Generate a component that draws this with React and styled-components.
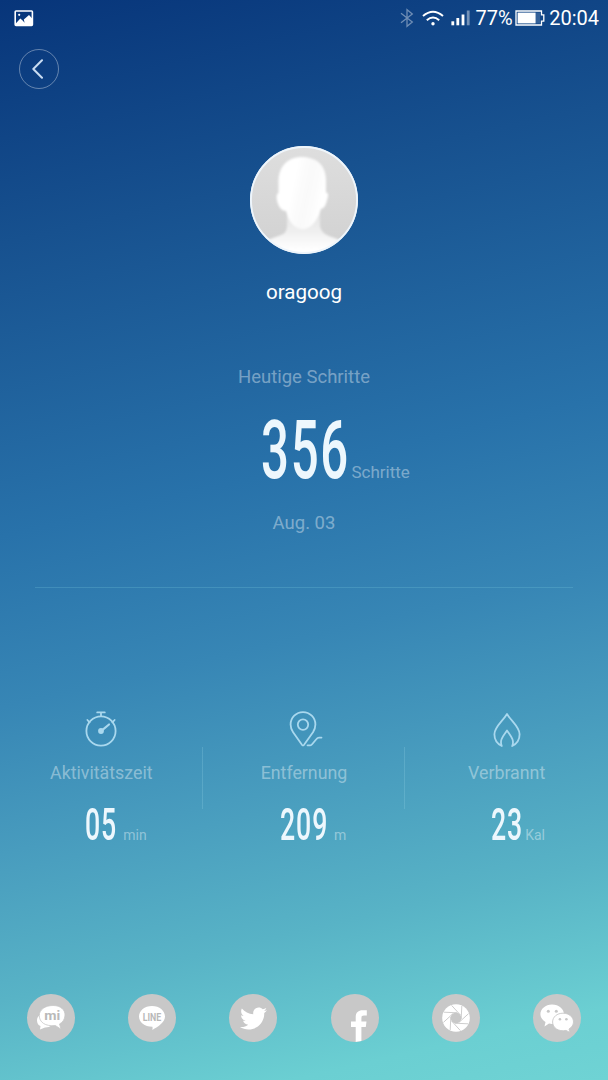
import React from 'react';
import styled, { createGlobalStyle } from 'styled-components';
import { FaTwitter } from 'react-icons/fa';

const PhotoIcon = () => (
  <svg width="20" height="17" viewBox="0 0 20 17">
    <rect x="1.2" y="1" width="17.2" height="14.4" rx="0.8" fill="none" stroke="#fff" strokeWidth="1.6" />
    <path d="M2 13.2 L6.3 8.4 L8.6 10.6 L10.6 12.8 L9.8 9.6 L15 5 L18 8.2 V15 H2 Z" fill="#fff" />
    <circle cx="5.2" cy="4.8" r="1.1" fill="#fff" />
  </svg>
);

const BluetoothIcon = () => (
  <svg width="14" height="20" viewBox="0 0 14 20">
    <path d="M1 5.3 L12.3 14 L7 18.3 V1.7 L12.3 6 L1 14.7" fill="none" stroke="#fff" strokeOpacity="0.4" strokeWidth="1.3" />
  </svg>
);

const WifiIcon = () => (
  <svg width="22" height="17" viewBox="0 0 22 17" fill="none" stroke="#fff" strokeWidth="2">
    <path d="M1 6 Q11 -2.6 21 6" />
    <path d="M4.8 10.2 Q11 4.8 17.2 10.2" />
    <circle cx="11" cy="13.8" r="1.7" fill="#fff" stroke="none" />
  </svg>
);

const SignalIcon = () => (
  <svg width="20" height="16" viewBox="0 0 20 16" fill="#fff">
    <rect x="0.4" y="11.3" width="2.8" height="4" />
    <rect x="5.4" y="8" width="2.8" height="7.3" />
    <rect x="10.6" y="4.5" width="2.8" height="10.8" />
    <rect x="15.8" y="0.5" width="2.8" height="14.8" opacity="0.42" />
  </svg>
);

const BatteryIcon = () => (
  <svg width="30" height="16" viewBox="0 0 30 16">
    <path d="M1 1 H26.5 V4.8 H28.8 V11.2 H26.5 V15 H1 Z" fill="none" stroke="#fff" strokeWidth="1.3" />
    <rect x="2.6" y="2.6" width="18" height="10.8" fill="#fff" />
    <rect x="20.6" y="2.6" width="4.5" height="10.8" fill="#fff" opacity="0.15" />
  </svg>
);

const ChevronIcon = () => (
  <svg width="12" height="20" viewBox="0 0 12 20">
    <path d="M10 1.3 L1.3 10 L10 18.7" fill="none" stroke="#c9dcf2" strokeWidth="2" strokeLinecap="round" strokeLinejoin="round" />
  </svg>
);

const Portrait = () => (
  <svg width="108" height="108" viewBox="0 0 108 108">
    <defs>
      <clipPath id="portraitClip"><circle cx="54" cy="54" r="53" /></clipPath>
      <linearGradient id="backdrop" x1="0" y1="0" x2="0" y2="1">
        <stop offset="0" stopColor="#dedede" />
        <stop offset="1" stopColor="#d1d1d1" />
      </linearGradient>
      <linearGradient id="face" x1="0" y1="0.3" x2="1" y2="0.6">
        <stop offset="0" stopColor="#fff" />
        <stop offset="0.3" stopColor="#fff" />
        <stop offset="0.6" stopColor="#f9f9f9" />
        <stop offset="0.9" stopColor="#fff" />
      </linearGradient>
      <linearGradient id="neck" x1="0" y1="0" x2="0" y2="1">
        <stop offset="0" stopColor="#dfdfdf" />
        <stop offset="0.5" stopColor="#f0f0f0" />
        <stop offset="0.85" stopColor="#fff" />
      </linearGradient>
      <filter id="soft"><feGaussianBlur stdDeviation="1" /></filter>
    </defs>
    <circle cx="54" cy="54" r="54" fill="#eef5fb" />
    <g clipPath="url(#portraitClip)">
      <rect width="108" height="108" fill="url(#backdrop)" />
      <g filter="url(#soft)">
        <path d="M37 66 V80 Q37 87 31 89 L4 99 V112 H104 V99 L79 90 Q71 87 70 80 V60 Z" fill="url(#neck)" />
        <path d="M52 11 C37 11 28.5 21 28.5 36 V47 C25 48 27 57 29.5 61 Q32 65 36 65 C38 73 43 83 52.5 83 C62 83 68 73 71 63 Q75 62 76.5 56 C78.5 50 79 46 76 47 V34 C76 20 67 11 52 11 Z" fill="url(#face)" />
      </g>
    </g>
    <circle cx="54" cy="54" r="53" fill="none" stroke="#eef5fb" strokeWidth="1.8" />
  </svg>
);

const StopwatchIcon = () => (
  <svg width="38" height="38" viewBox="0 0 38 38" fill="none" stroke="currentColor" strokeWidth="1.8" strokeLinecap="round">
    <circle cx="19" cy="21" r="14.6" />
    <path d="M15.2 2.4 H22.8 M19 2.6 V6" />
    <path d="M5.4 10 L7.6 12.4 M32.6 10 L30.4 12.4" />
    <path d="M20.5 19.8 L27 14.5" strokeWidth="2.2" />
    <circle cx="19" cy="21" r="2.9" fill="currentColor" stroke="none" />
  </svg>
);

const RouteIcon = () => (
  <svg width="38" height="38" viewBox="0 0 38 38" fill="none" stroke="currentColor" strokeWidth="1.8" strokeLinecap="round" strokeLinejoin="round">
    <path d="M18 35.5 Q17 35.5 16.4 34 L8.1 22.3 C5.9 19.1 5.6 17 5.6 14.5 A12.4 12.4 0 0 1 30.4 14.5 C30.4 17 29.8 19.3 28 22.3 L19.6 34 Q19 35.5 18 35.5 Z" />
    <circle cx="18" cy="14.6" r="5.2" />
    <path d="M22.5 35.3 H25.3 Q26.3 35.3 27.3 34 L31.5 29 Q32.6 27.6 34 27.6 H36.5" />
  </svg>
);

const FlameIcon = () => (
  <svg width="38" height="38" viewBox="0 0 38 38" fill="none" stroke="currentColor" strokeWidth="1.8" strokeLinecap="round" strokeLinejoin="round">
    <path d="M13.8 36 C8.8 33.5 6.4 29.4 6.4 24.2 C6.4 17 14.5 11.5 19 4 C23.5 11.5 31.6 17 31.6 24.2 C31.6 29.4 29.2 33.5 24.2 36 C26.6 30.5 23.5 27 19 20.5 C14.5 27 11.4 30.5 13.8 36 Z" />
  </svg>
);

const MiTalkIcon = () => (
  <svg width="48" height="48" viewBox="0 0 48 48">
    <path d="M14 20.5 C8.5 22.5 9 30.5 13.5 32 L13 35.4 L18 33.5 Q22 33.6 24.5 31.5 Z" fill="#fff" />
    <path d="M26 11.5 C34 11.5 38 16 38 21 C38 25.4 35.3 28.5 32.5 30 L34 35.2 L28.3 31.5 C18 32.7 12.3 28 12.3 21.5 C12.3 15.8 18 11.5 26 11.5 Z" fill="#fff" stroke="#c8c8c8" strokeWidth="0.8" />
    <IconText x="25.3" y="26" fontSize="13" textLength="16">mi</IconText>
  </svg>
);

const LineIcon = () => (
  <svg width="48" height="48" viewBox="0 0 48 48">
    <path d="M24 12 C31.5 12 37 16.8 37 22.6 C37 28.3 30.5 32.5 24.3 36 Q24.8 34 24.4 32.8 C16.5 32.8 11 28.4 11 22.6 C11 16.8 16.5 12 24 12 Z" fill="#fff" />
    <IconText x="24" y="26.8" fontSize="10.6" textLength="18.5">LINE</IconText>
  </svg>
);

const FacebookIcon = () => (
  <svg width="48" height="48" viewBox="0 0 48 48">
    <path d="M24.7 48 V33 H20 V27.6 H24.7 V23 C24.7 18.3 27.5 16.2 31.5 16.2 H35.8 V21.6 H33 C31 21.6 30.4 22.5 30.4 24.2 V27.6 H35.5 L34.8 33 H30.4 V47.2 Z" fill="#fff" />
  </svg>
);

const ShutterIcon = () => (
  <svg width="48" height="48" viewBox="0 0 48 48">
    <circle cx="24" cy="24" r="13.8" fill="#fff" />
    {[0, 45, 90, 135, 180, 225, 270, 315].map((angle) => (
      <path key={angle} d="M25 18.8 L12 18.2" stroke="#c8c8c8" strokeWidth="0.9" transform={`rotate(${angle} 24 24)`} />
    ))}
    <circle cx="24" cy="24" r="5.4" fill="#c8c8c8" />
  </svg>
);

const WeChatIcon = () => (
  <svg width="48" height="48" viewBox="0 0 48 48" fill="#fff">
    <path d="M19 10.5 C26 10.5 31 15 31 20.5 C31 26 26 30 19 30 L16 29.6 L11.5 32.4 L12.5 28 C9.5 26 7.4 23.5 7.4 20.2 C7.4 15 12.5 10.5 19 10.5 Z" />
    <circle cx="15.3" cy="17.3" r="1.5" fill="#c8c8c8" />
    <circle cx="23.3" cy="17.3" r="1.5" fill="#c8c8c8" />
    <path d="M30 19.2 C36 19.2 40.5 23 40.5 28 C40.5 31 38.5 33.5 36 35 L37 38.5 L33 36.4 C25.5 38 19.6 33.8 19.6 28 C19.6 23 24 19.2 30 19.2 Z" stroke="#c8c8c8" strokeWidth="0.9" />
    <circle cx="26.9" cy="25.3" r="1.3" fill="#c8c8c8" />
    <circle cx="33.4" cy="25.3" r="1.3" fill="#c8c8c8" />
  </svg>
);

const stats = [
  { label: 'Aktivitätszeit', value: '05', unit: 'min', gap: 5.5, Icon: StopwatchIcon },
  { label: 'Entfernung', value: '209', unit: 'm', gap: 5.5, Icon: RouteIcon },
  { label: 'Verbrannt', value: '23', unit: 'Kal', gap: 2, Icon: FlameIcon },
];

const shares = [
  { name: 'mitalk', icon: <MiTalkIcon /> },
  { name: 'line', icon: <LineIcon /> },
  { name: 'twitter', icon: <FaTwitter size={27} /> },
  { name: 'facebook', icon: <FacebookIcon /> },
  { name: 'moments', icon: <ShutterIcon /> },
  { name: 'wechat', icon: <WeChatIcon /> },
];

const Figure = ({ value, unit, size, unitSize, digit, gap }) => (
  <FigureRow>
    <Digits $size={size} $width={digit * value.length}><span>{value}</span></Digits>
    <Unit $size={unitSize} $gap={gap}>{unit}</Unit>
  </FigureRow>
);

const App = () => (
  <Screen>
    <GlobalStyle />
    <StatusBar>
      <PhotoIcon />
      <StatusGroup>
        <BluetoothIcon />
        <WifiIcon />
        <SignalIcon />
        <Charge>
          <StatusText>77%</StatusText>
          <BatteryIcon />
        </Charge>
        <StatusText>20:04</StatusText>
      </StatusGroup>
    </StatusBar>
    <BackButton type="button" aria-label="Zurück"><ChevronIcon /></BackButton>
    <Profile>
      <Portrait />
      <Name>oragoog</Name>
    </Profile>
    <Today>
      <Caption>Heutige Schritte</Caption>
      <Figure value="356" unit="Schritte" size={82} unitSize={17} digit={29} gap={4} />
      <Caption>Aug. 03</Caption>
    </Today>
    <Rule />
    <Stats>
      {stats.map(({ label, value, unit, gap, Icon }) => (
        <Stat key={label}>
          <Icon />
          <StatLabel>{label}</StatLabel>
          <Figure value={value} unit={unit} size={44.5} unitSize={14} digit={16} gap={gap + 0.5} />
        </Stat>
      ))}
    </Stats>
    <ShareBar>
      {shares.map(({ name, icon }) => <Share key={name} type="button" aria-label={name}>{icon}</Share>)}
    </ShareBar>
  </Screen>
);


export default App;


const GlobalStyle = createGlobalStyle`
  body {
    margin: 0;
  }
  svg {
    display: block;
    flex-shrink: 0;
  }
`;

const Screen = styled.div`
  background: linear-gradient(167deg, #07357a 0%, #17518f 20%, #2872aa 44%, #3786b5 58%, #489cbe 70%, #58b3c6 82%, #6bcfd2 94%, #6fd3d4 100%);
  box-sizing: border-box;
  color: #fff;
  display: flex;
  flex-direction: column;
  font-family: Roboto, sans-serif;
  height: 1080px;
  overflow: hidden;
  width: 608px;
`;

const StatusBar = styled.div`
  align-items: center;
  box-sizing: border-box;
  display: flex;
  height: 36px;
  justify-content: space-between;
  padding: 0 9px 0 14px;
`;

const StatusGroup = styled.div`
  align-items: center;
  display: flex;
  gap: 4.5px;
  svg + svg {
    margin-left: 3px;
  }
`;

const Charge = styled.div`
  align-items: center;
  display: flex;
  gap: 2px;
`;

const StatusText = styled.span`
  font-size: 20px;
  line-height: 36px;
`;

const BackButton = styled.button`
  align-items: center;
  background: none;
  border: 1px solid rgba(255, 255, 255, .36);
  border-radius: 50%;
  box-sizing: border-box;
  display: flex;
  height: 40px;
  justify-content: center;
  margin: 13px 0 0 19px;
  padding: 0 3px 0 0;
  width: 40px;
`;

const Profile = styled.div`
  align-items: center;
  display: flex;
  flex-direction: column;
  padding-top: 57px;
`;

const Name = styled.div`
  font-size: 20.6px;
  line-height: 30px;
  margin-top: 23px;
`;

const Today = styled.div`
  padding-top: 55px;
  text-align: center;
`;

const Caption = styled.div`
  color: rgba(255, 255, 255, .4);
  font-size: 18.5px;
  line-height: 30px;
`;

const FigureRow = styled.div`
  align-items: baseline;
  display: grid;
  grid-template-columns: 1fr auto 1fr;
  width: 100%;
`;

// Digits are squeezed to a condensed cut, with the box as wide as the result
const Digits = styled.span`
  color: #edf7fd;
  display: block;
  font-size: ${({ $size }) => $size}px;
  font-weight: 500;
  grid-column: 2;
  height: ${({ $size }) => $size * 1.41}px;
  letter-spacing: .035em;
  line-height: 1.43;
  text-align: left;
  width: ${({ $width }) => $width}px;
  span {
    display: inline-block;
    transform: scaleX(.6);
    transform-origin: left;
  }
`;

const Unit = styled.span`
  color: rgba(255, 255, 255, .4);
  font-size: ${({ $size }) => $size}px;
  padding-left: ${({ $gap }) => $gap}px;
  text-align: left;
`;

const Rule = styled.div`
  background: rgba(120, 200, 220, .26);
  height: 1px;
  margin: 49px 35px 0;
`;

const Stats = styled.div`
  display: grid;
  grid-template-columns: repeat(3, 1fr);
  padding-top: 122px;
`;

const Stat = styled.div`
  align-items: center;
  background: linear-gradient(rgba(160, 220, 235, .22), rgba(160, 220, 235, .22)) no-repeat right 37px / 1px 62px;
  color: #a9d8ee;
  display: flex;
  flex-direction: column;
  &:last-child {
    background: none;
  }
`;

const StatLabel = styled.div`
  color: rgba(255, 255, 255, .4);
  font-size: 17.8px;
  line-height: 30px;
  margin: 10px 0 6px;
`;

const ShareBar = styled.div`
  display: grid;
  grid-template-columns: repeat(6, 1fr);
  justify-items: center;
  margin-top: auto;
  padding-bottom: 38px;
`;

const Share = styled.button`
  align-items: center;
  background: #c8c8c8;
  border: 0;
  border-radius: 50%;
  color: #fff;
  display: flex;
  height: 48px;
  justify-content: center;
  overflow: hidden;
  padding: 0;
  width: 48px;
`;

const IconText = styled.text.attrs({ textAnchor: 'middle', lengthAdjust: 'spacingAndGlyphs' })`
  fill: #b9b9b9;
  font-family: Roboto, sans-serif;
  font-weight: 700;
`;
